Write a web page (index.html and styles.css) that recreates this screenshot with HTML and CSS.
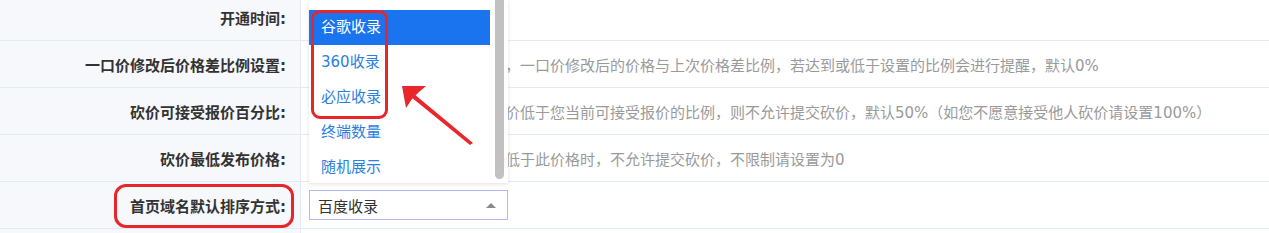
FILE: index.html
```html
<!DOCTYPE html>
<html lang="zh-CN">
<head>
    <meta charset="UTF-8">
    <title>系统设置</title>
    <link rel="stylesheet" href="styles.css">
</head>
<body>
    <div class="page">
        <table class="form-table">
            <tr>
                <th>开通时间:</th>
                <td><input type="text" class="ipt" value=""></td>
            </tr>
            <tr>
                <th>一口价修改后价格差比例设置:</th>
                <td><input type="text" class="ipt" value="0"><span class="tip">设置后，一口价修改后的价格与上次价格差比例，若达到或低于设置的比例会进行提醒，默认0%</span></td>
            </tr>
            <tr>
                <th>砍价可接受报价百分比:</th>
                <td><input type="text" class="ipt" value="50"><span class="tip">买家报价低于您当前可接受报价的比例，则不允许提交砍价，默认50%（如您不愿意接受他人砍价请设置100%）</span></td>
            </tr>
            <tr>
                <th>砍价最低发布价格:</th>
                <td><input type="text" class="ipt" value="0"><span class="tip">出价将低于此价格时，不允许提交砍价，不限制请设置为0</span></td>
            </tr>
            <tr>
                <th>首页域名默认排序方式:</th>
                <td>
                    <div class="select">
                        <span>百度收录</span>
                        <i class="caret"></i>
                    </div>
                </td>
            </tr>
            <tr>
                <th></th>
                <td></td>
            </tr>
        </table>

        <!-- open select list (scrolled, first option above the fold) -->
        <div class="dropdown">
            <ul class="options">
                <li class="active">谷歌收录</li>
                <li>360收录</li>
                <li>必应收录</li>
                <li>终端数量</li>
                <li>随机展示</li>
            </ul>
            <div class="scroll"><div class="thumb"></div></div>
        </div>

        <!-- annotations -->
        <div class="mark mark-list"></div>
        <div class="mark mark-label"></div>
        <svg class="arrow" width="90" height="75" viewBox="0 0 90 75">
            <path d="M76 63 L79 61 L20 12 L17 15 Z" fill="#e8262b"/>
            <path d="M8 4 L32 4 L25 10 L18 17 L12 26 Z" fill="#e8262b"/>
        </svg>
    </div>
</body>
</html>
```

FILE: styles.css
```css
html, body {
    margin: 0;
    padding: 0;
    background: #fff;
}
body {
    font-family: "DejaVu Sans", "Noto Sans CJK SC", sans-serif;
    font-size: 15px;
    color: #333;
    overflow: hidden;
}
.page {
    position: relative;
    width: 1269px;
    height: 233px;
    overflow: hidden;
}
.form-table {
    border-collapse: collapse;
    width: 100%;
    margin-top: -6px;
}
.form-table th,
.form-table td {
    height: 46px;
    padding: 0;
    border-bottom: 1px solid #e2eaf5;
    vertical-align: middle;
}
.form-table th {
    width: 286px;
    padding-right: 14px;
    text-align: right;
    font-weight: bold;
    color: #333;
    background: #f6f8fc;
    border-right: 1px solid #e2eaf5;
    white-space: nowrap;
}
.form-table td {
    padding-left: 8px;
    white-space: nowrap;
}
.ipt {
    width: 143px;
    height: 30px;
    box-sizing: border-box;
    margin: 0 8px 0 0;
    padding: 0 8px;
    border: 1px solid #cfd8e6;
    border-radius: 2px;
    font-family: inherit;
    font-size: 14px;
    vertical-align: middle;
}
.tip {
    color: #9a9a9a;
    vertical-align: middle;
}
.select {
    width: 199px;
    height: 30px;
    box-sizing: border-box;
    border: 1px solid #aebbef;
    background: #fff;
    display: flex;
    align-items: center;
    justify-content: space-between;
    padding: 0 9px 0 8px;
    color: #333;
}
.caret {
    width: 0;
    height: 0;
    border-left: 5px solid transparent;
    border-right: 5px solid transparent;
    border-bottom: 5px solid #8a8a8a;
    margin-right: 2px;
}

/* open list */
.dropdown {
    position: absolute;
    left: 309px;
    top: 0;
    width: 199px;
    height: 183px;
    background: #fff;
    box-shadow: 0 1px 4px rgba(0, 0, 0, 0.12);
    display: flex;
}
.options {
    list-style: none;
    margin: 0;
    padding: 10px 0 0 0;
    flex: 1;
}
.options li {
    height: 35px;
    line-height: 35px;
    padding-left: 12px;
    color: #2b7fe0;
}
.options li.active {
    background: #1a74f0;
    color: #fff;
}
.scroll {
    width: 18px;
    display: flex;
    justify-content: center;
}
.thumb {
    width: 9px;
    height: 179px;
    background: #c1c1c1;
    border-radius: 0 0 5px 5px;
}

/* red annotations */
.mark {
    position: absolute;
    border: 3px solid #e5262a;
    box-sizing: border-box;
}
.mark-list {
    left: 311px;
    top: 10px;
    width: 77px;
    height: 109px;
    border-radius: 9px;
}
.mark-label {
    left: 114px;
    top: 184px;
    width: 180px;
    height: 44px;
    border-radius: 12px;
}
.arrow {
    position: absolute;
    left: 394px;
    top: 82px;
}
```
